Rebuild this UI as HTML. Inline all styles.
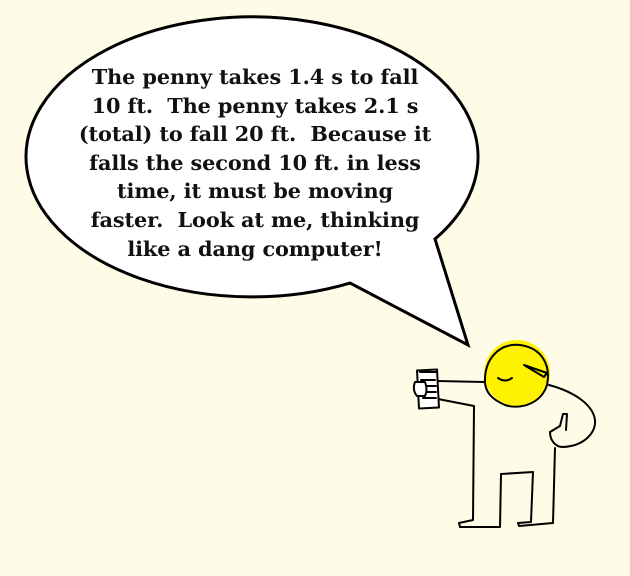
<!DOCTYPE html>
<html><head><style>
body{margin:0;width:630px;height:576px;background:#fefce6;overflow:hidden;position:relative}
svg{position:absolute;left:0;top:0}
.t{position:absolute;left:30px;width:450px;top:63px;text-align:center;font:bold 20.8px/28.6px "DejaVu Serif","Liberation Serif",serif;color:#111;letter-spacing:-0.1px}
</style></head><body>
<svg width="630" height="576">
<path d="M435,239 L468,345 L350,283 A226,140 0 1 1 435,239 Z" fill="#fff" stroke="#000" stroke-width="3" stroke-linejoin="miter"/>
<circle cx="517" cy="373" r="33" fill="#fff200"/>
<g fill="none" stroke="#000" stroke-width="2" stroke-linecap="round" stroke-linejoin="round">
<path d="M485,383 C484,358 500,343 520,345 C542,348 551,365 547,385 C541,404 520,410 505,405 C491,399 486,392 485,383"/>
<path d="M498,378 Q505,383 512,378"/>
<path d="M524,365 L544,377 L547,373 Z"/>
<path d="M437,381 L484,382"/>
<path d="M438,399 L474,406 L473,520 L459,523 L460,527 L500,527 L501,474 L533,472 L531,522 L518,523 L519,526 L553,523 L555,448"/>
<path d="M549,385 C575,392 593,405 595,420 C596,432 585,446 563,447 C555,447 550,440 550,432 L560,426 L563,414 L567,414 L566,430"/>
<rect x="418" y="370" width="20" height="38" transform="rotate(-3 428 389)" fill="#fff"/>
<path d="M420,372 h16 M421,380 h14 M422,386 h14 M422,392 h14 M423,398 h13"/>
<path d="M415,382 q-3,8 2,14 l8,0 q3,-6 0,-14 z" fill="#fff"/>
</g>
</svg>
<div class="t">The penny takes 1.4 s to fall<br>10 ft.&nbsp; The penny takes 2.1 s<br>(total) to fall 20 ft.&nbsp; Because it<br>falls the second 10 ft. in less<br>time, it must be moving<br>faster.&nbsp; Look at me, thinking<br>like a dang computer!</div>
</body></html>
